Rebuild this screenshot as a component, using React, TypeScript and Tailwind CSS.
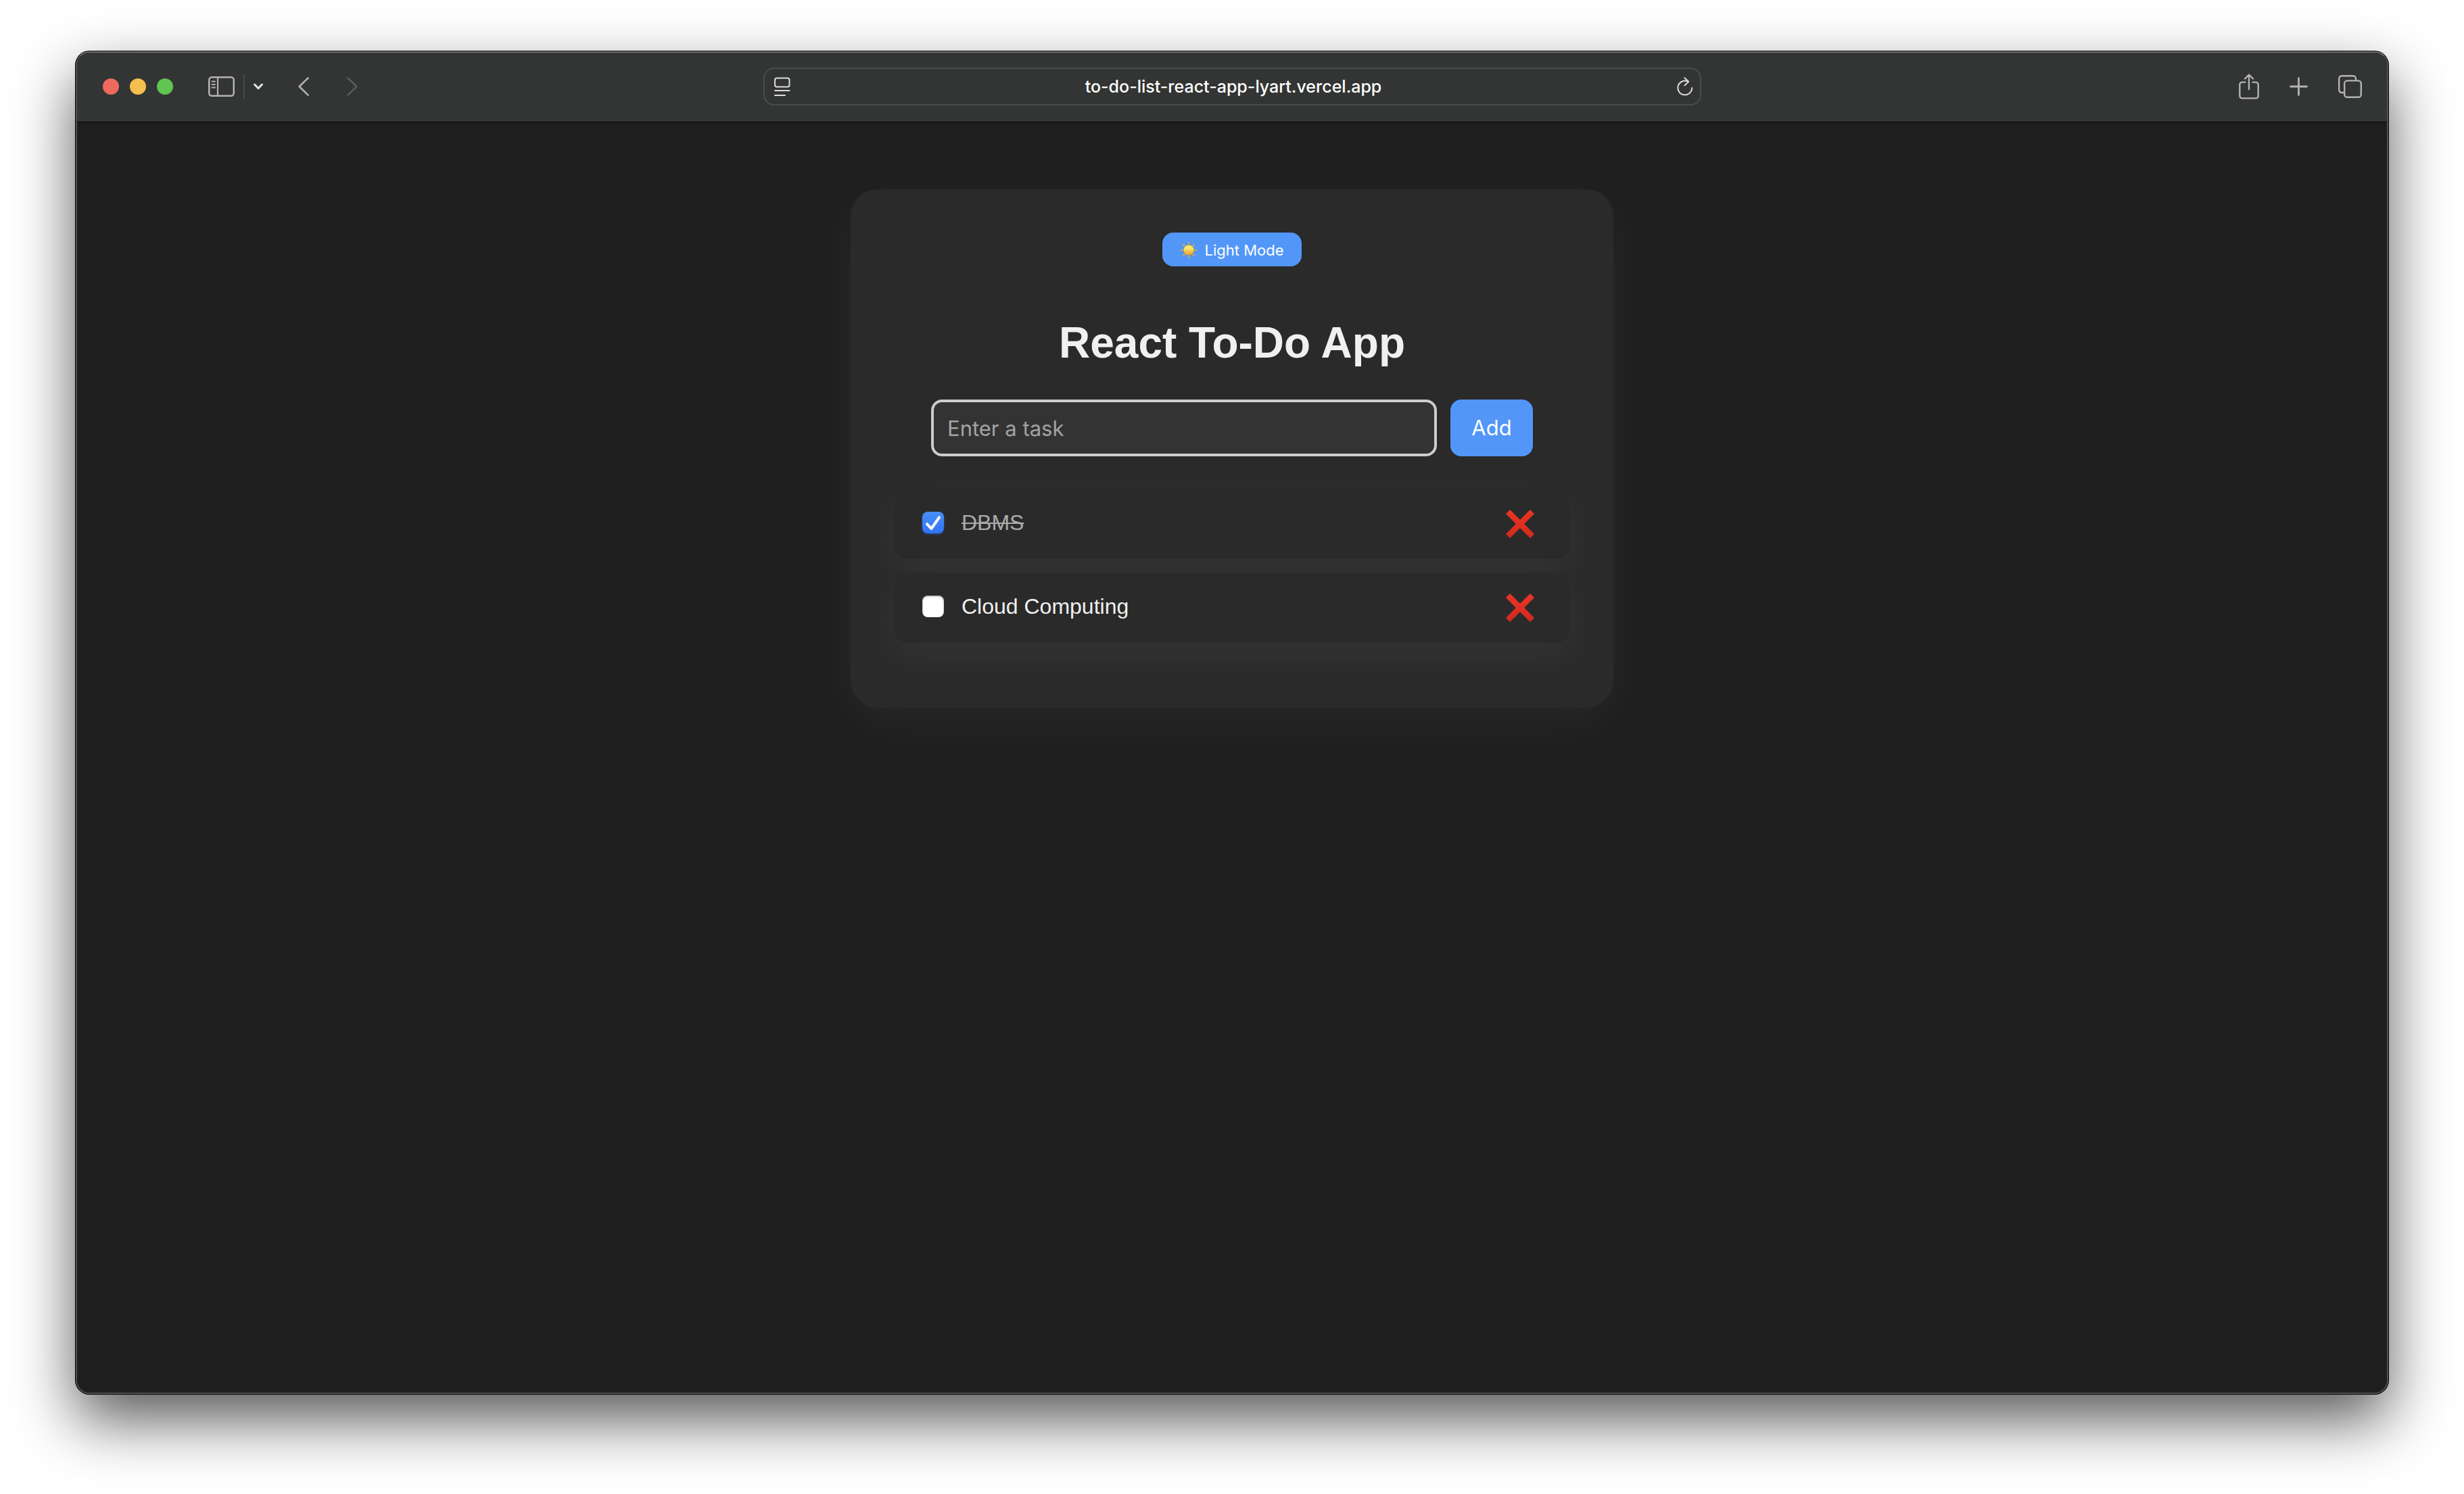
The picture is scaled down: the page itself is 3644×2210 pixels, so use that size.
import { useState } from "react";

type Task = { id: number; text: string; done: boolean };

const initialTasks: Task[] = [
  { id: 1, text: "DBMS", done: true },
  { id: 2, text: "Cloud Computing", done: false },
];

function SidebarIcon() {
  return (
    <svg width="39" height="30" viewBox="0 0 39 30" fill="none" stroke="#b3b3b3" strokeLinecap="round">
      <rect x="1.25" y="1.25" width="36.5" height="27.5" rx="4" strokeWidth="2.5" />
      <path d="M14 2v26" strokeWidth="2.2" />
      <path d="M5.5 7.5h4.5M5.5 12h4.5M5.5 16.5h4.5" strokeWidth="1.8" />
    </svg>
  );
}

function ChevronDownIcon() {
  return (
    <svg width="14" height="10" viewBox="0 0 14 10" fill="none" stroke="#e2e2e2" strokeWidth="3" strokeLinecap="round" strokeLinejoin="round">
      <path d="M1.6 2 7 7.8 12.4 2" />
    </svg>
  );
}

function BackIcon() {
  return (
    <svg width="16" height="28" viewBox="0 0 16 28" fill="none" stroke="#b3b3b3" strokeWidth="2.6" strokeLinecap="round" strokeLinejoin="round">
      <path d="M14.6 1.4 1.6 14l13 12.6" />
    </svg>
  );
}

function ForwardIcon() {
  return (
    <svg width="16" height="28" viewBox="0 0 16 28" fill="none" stroke="#5a5b5b" strokeWidth="2.6" strokeLinecap="round" strokeLinejoin="round">
      <path d="M1.4 1.4 14.4 14l-13 12.6" />
    </svg>
  );
}

function ReaderIcon() {
  return (
    <svg width="24" height="28" viewBox="0 0 24 28" fill="none" stroke="#dcdcdc" strokeWidth="2" strokeLinecap="round">
      <rect x="1" y="1.4" width="21.5" height="13" rx="3" />
      <path d="M1 20h21.5M1 27h15" />
    </svg>
  );
}

function ReloadIcon() {
  return (
    <svg width="24" height="28" viewBox="0 0 24 28" fill="none" stroke="#dcdcdc" strokeWidth="2" strokeLinecap="round" strokeLinejoin="round">
      <path d="M22.2 16A10.4 10.4 0 1 1 16.8 6.8" />
      <path d="M11.4 1.2 17.2 6.8 11.4 12.4" />
    </svg>
  );
}

function ShareIcon() {
  return (
    <svg width="30" height="38" viewBox="0 0 30 38" fill="none" stroke="#b3b3b3" strokeWidth="2.4" strokeLinecap="round" strokeLinejoin="round">
      <path d="M9.5 12.6H5a3.7 3.7 0 0 0-3.7 3.7v16.4A3.7 3.7 0 0 0 5 36.4h20a3.7 3.7 0 0 0 3.7-3.7V16.3A3.7 3.7 0 0 0 25 12.6h-4.5" />
      <path d="M15 23V2M9 7.4 15 1.5l6 5.900" />
    </svg>
  );
}

function PlusIcon() {
  return (
    <svg width="27" height="28" viewBox="0 0 27 28" fill="none" stroke="#b3b3b3" strokeWidth="2.8" strokeLinecap="round">
      <path d="M13.5 1.600v24.800M1.500 14h24" />
    </svg>
  );
}

function TabsIcon() {
  return (
    <svg width="35" height="34" viewBox="0 0 35 34" fill="none" stroke="#b3b3b3" strokeWidth="2.400">
      <rect x="9.200" y="8.400" width="24.600" height="24.400" rx="4" />
      <path d="M9 26H5.200a4 4 0 0 1-4-4V5.200a4 4 0 0 1 4-4H22a4 4 0 0 1 4 4V8" />
    </svg>
  );
}

const rayAngles = [0, 45, 90, 135, 180, 225, 270, 315];

function SunIcon() {
  return (
    <svg width="26" height="26" viewBox="0 0 26 26">
      <defs>
        <linearGradient id="sun-disc" x1="0" y1="0" x2="0" y2="1">
          <stop offset="0" stopColor="#fbe04e" />
          <stop offset="0.3" stopColor="#fbe876" />
          <stop offset="0.65" stopColor="#f3c142" />
          <stop offset="1" stopColor="#e39c35" />
        </linearGradient>
      </defs>
      {rayAngles.map((a) => (
        <path key={a} d="M13 0 14.500 4H11.500z" fill="#e3b84e" stroke="#b58c3c" strokeWidth="0.3" transform={`rotate(${a} 13 13)`} />
      ))}
      <circle cx="13" cy="13" r="7.800" fill="url(#sun-disc)" stroke="#b98a35" strokeWidth="0.5" />
    </svg>
  );
}

function CrossIcon() {
  return (
    <svg width="42" height="42" viewBox="0 0 42 42">
      <defs>
        <linearGradient id="cross-red" x1="0" y1="0" x2="0" y2="1">
          <stop offset="0" stopColor="#e93524" />
          <stop offset="1" stopColor="#d02a1e" />
        </linearGradient>
      </defs>
      <path
        fill="url(#cross-red)"
        d="M6 0 21 14.800 36 0 42 6 27.200 21 42 36 36 42 21 27.200 6 42 0 36 14.800 21 0 6z"
      />
    </svg>
  );
}

function Toolbar() {
  return (
    <header className="grid h-[103px] grid-cols-[1fr_minmax(0,1387px)_1fr] items-center border-b border-black bg-[#333534] pb-0.5">
      <div className="flex items-center pl-[38px]">
        <div className="mr-[52px] flex gap-4">
          <button aria-label="Close" className="size-6 rounded-full bg-[#ed6a5e]" />
          <button aria-label="Minimize" className="size-6 rounded-full bg-[#f5bf4f]" />
          <button aria-label="Zoom" className="size-6 rounded-full bg-[#61c554]" />
        </div>
        <button aria-label="Show sidebar"><SidebarIcon /></button>
        <span className="mx-[13px] h-9 w-0.5 bg-[#474848]" />
        <button aria-label="Tab groups"><ChevronDownIcon /></button>
        <button aria-label="Back" className="ml-[52px]"><BackIcon /></button>
        <button aria-label="Forward" className="ml-14"><ForwardIcon /></button>
      </div>

      <div className="flex h-14 items-center rounded-2xl border-2 border-[#4b4c4c] pr-2.5 pl-3.5">
        <button aria-label="Reader view"><ReaderIcon /></button>
        <input
          aria-label="Address"
          defaultValue="to-do-list-react-app-lyart.vercel.app"
          className="min-w-0 flex-1 bg-transparent pt-0.5 text-center font-['Inter'] text-[25px] font-medium text-white outline-none"
        />
        <button aria-label="Reload"><ReloadIcon /></button>
      </div>

      <div className="flex items-center justify-end gap-[45px] pr-[37px]">
        <button aria-label="Share"><ShareIcon /></button>
        <button aria-label="New tab"><PlusIcon /></button>
        <button aria-label="Show tabs"><TabsIcon /></button>
      </div>
    </header>
  );
}

function TaskItem({ task, onToggle, onRemove }: { task: Task; onToggle: () => void; onRemove: () => void }) {
  return (
    <li className="flex items-center rounded-[20px] bg-[#2a2a2a] px-[42px] py-5 shadow-[0_20px_60px_rgba(255,255,255,0.05)]">
      <label className="flex flex-1 items-center gap-[26px] pb-1">
        <span className="relative size-8">
          <input
            type="checkbox"
            checked={task.done}
            onChange={onToggle}
            className="block size-8 appearance-none rounded-lg bg-white shadow-[inset_0_1px_3px_rgba(0,0,0,0.4)] checked:bg-linear-to-b checked:from-[#4a8ff8] checked:to-[#2f74f5] checked:shadow-[0_1px_3px_rgba(47,116,245,0.5)]"
          />
          {task.done && (
            <svg className="pointer-events-none absolute inset-0" width="32" height="32" viewBox="0 0 32 32" fill="none" stroke="#fff" strokeWidth="4" strokeLinecap="round" strokeLinejoin="round">
              <path d="M7 18.200 13.300 25 25 8.300" />
            </svg>
          )}
        </span>
        <span className={task.done ? "text-[32px] leading-10 text-[#aaaaaa] line-through decoration-2" : "text-[32px] leading-10 text-[#f0f0f0]"}>
          {task.text}
        </span>
      </label>
      <button aria-label={`Delete ${task.text}`} onClick={onRemove} className="grid size-16 place-items-center">
        <CrossIcon />
      </button>
    </li>
  );
}

export default function App() {
  const [tasks, setTasks] = useState(initialTasks);
  const [draft, setDraft] = useState("");

  const addTask = () => {
    if (!draft.trim()) return;
    setTasks([...tasks, { id: Date.now(), text: draft.trim(), done: false }]);
    setDraft("");
  };

  return (
    <div className="flex min-h-screen flex-col bg-white px-28 pt-[76px] pb-[148px] font-['Liberation_Sans',sans-serif]">
      <div className="flex flex-1 flex-col overflow-hidden rounded-[20px] border-2 border-[#505050] border-t-[#727372] bg-[#1e1e1e] shadow-[0_0_0_1px_#000,0_38px_90px_rgba(0,0,0,0.66)]">
        <Toolbar />
        <main className="flex flex-1 flex-col items-center pt-[99px]">
          <section className="flex w-full max-w-[1128px] flex-col items-center rounded-[40px] bg-[#2a2a2a] px-16 pt-16 pb-24 shadow-[0_20px_80px_rgba(255,255,255,0.05)]">
            <button className="flex h-[50px] items-center gap-2.5 rounded-2xl bg-[#5296f8] px-[26px] pt-0.5 font-['Inter'] text-[22px] text-white">
              <SunIcon />
              Light Mode
            </button>
            <h1 className="mt-[76px] text-[64px] leading-[74px] font-bold text-[#f0f0f0]">React To-Do App</h1>
            <form
              className="mt-[47px] flex w-full max-w-[890px] gap-5"
              onSubmit={(e) => {
                e.preventDefault();
                addTask();
              }}
            >
              <input
                aria-label="Task"
                placeholder="Enter a task"
                value={draft}
                onChange={(e) => setDraft(e.target.value)}
                className="h-[84px] min-w-0 flex-1 rounded-2xl border-4 border-[#cccccc] bg-[#333333] px-5 font-['Inter'] text-[31px] text-[#f0f0f0] outline-none placeholder:text-[#a3a3a3]"
              />
              <button type="submit" className="h-[84px] w-[122px] rounded-2xl bg-[#5296f8] font-['Inter'] text-[31px] text-white">
                Add
              </button>
            </form>
            <ul className="mt-12 flex w-full flex-col gap-5">
              {tasks.map((task) => (
                <TaskItem
                  key={task.id}
                  task={task}
                  onToggle={() => setTasks(tasks.map((t) => (t.id === task.id ? { ...t, done: !t.done } : t)))}
                  onRemove={() => setTasks(tasks.filter((t) => t.id !== task.id))}
                />
              ))}
            </ul>
          </section>
        </main>
      </div>
    </div>
  );
}
